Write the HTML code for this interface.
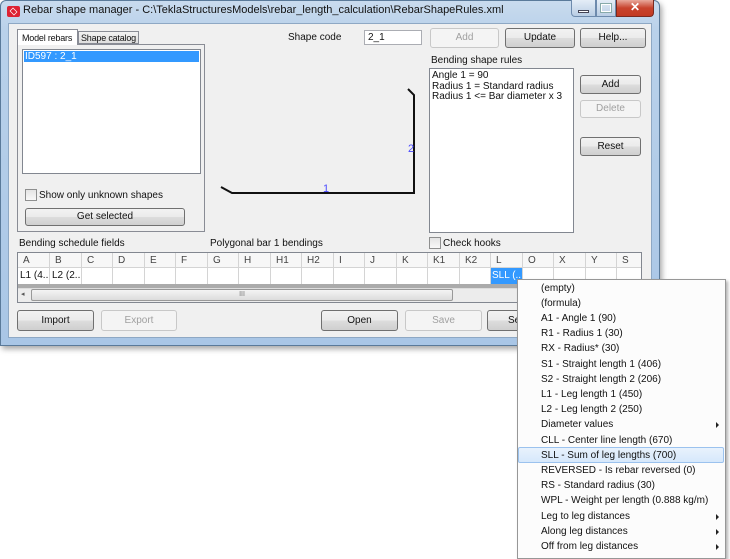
<!DOCTYPE html>
<html><head><style>
*{margin:0;padding:0;box-sizing:border-box}
body{width:730px;height:552px;background:#fff;position:relative;overflow:hidden;font-family:"Liberation Sans",sans-serif;font-size:10px;color:#111}
.a{position:absolute;white-space:nowrap}
.btn{position:absolute;border:1px solid #707070;border-radius:3px;background:linear-gradient(#f2f2f2,#ebebeb 50%,#dddddd 51%,#cfcfcf);text-align:center;font-size:10px;color:#111;white-space:nowrap}
.dis{border-color:#c8c8c8;background:#f4f4f4;color:#a0a0a0}
.cb{position:absolute;width:12px;height:12px;border:1px solid #8e8f8f;background:linear-gradient(#e4e4e4,#f8f8f8)}
.col{position:absolute;top:0;height:31px;border-right:1px solid #d4d4d4}
.mi{position:absolute;left:23px;font-size:10px;color:#111;white-space:nowrap}
.arr{position:absolute;right:6px;width:0;height:0;border-left:3px solid #222;border-top:3px solid transparent;border-bottom:3px solid transparent}
</style></head><body>
<div class="a" style="left:0;top:0;width:660px;height:346px;background:linear-gradient(#c9dbee,#b9d1ea 30px,#a9c6e6);border:1px solid #5a7a9a;border-radius:6px 6px 0 0;box-shadow:2px 3px 6px rgba(0,0,0,.35)"></div>
<div class="a" style="left:7px;top:6px;width:13px;height:11px;background:#d23;border-radius:2px"></div>
<div class="a" style="left:9px;top:8px;width:9px;height:7px;border:1px solid #fff;transform:rotate(45deg) scale(.7)"></div>
<div class="a" style="left:23px;top:4px;font-size:11px;color:#111">Rebar shape manager - C:\TeklaStructuresModels\rebar_length_calculation\RebarShapeRules.xml</div>
<div class="a" style="left:571px;top:0;width:25px;height:17px;border:1px solid #6d8aad;border-top:none;border-radius:0 0 0 4px;background:linear-gradient(#e4edf7,#b9cde4)"></div>
<div class="a" style="left:578px;top:10px;width:11px;height:3px;background:#fff;border:1px solid #445"></div>
<div class="a" style="left:596px;top:0;width:20px;height:17px;border:1px solid #6d8aad;border-top:none;background:linear-gradient(#e4edf7,#b9cde4)"></div>
<div class="a" style="left:601px;top:4px;width:10px;height:8px;border:1px solid #fff;outline:1px solid #8aa"></div>
<div class="a" style="left:616px;top:0;width:38px;height:17px;border:1px solid #7a2a20;border-top:none;border-radius:0 0 4px 0;background:linear-gradient(#e9a99c,#c8432d 50%,#c23a23);color:#fff;font-weight:bold;font-size:12px;text-align:center;line-height:15px">✕</div>
<div class="a" style="left:8px;top:23px;width:644px;height:315px;background:#f0f0f0;border:1px solid #8ea8c4"></div>
<div class="a" style="left:17px;top:44px;width:188px;height:188px;border:1px solid #898c95;background:#fff"></div>
<div class="a" style="left:17px;top:29px;width:61px;height:16px;border:1px solid #898c95;border-bottom:none;background:#fff;font-size:9px;letter-spacing:-0.2px;padding:3px 0 0 4px;overflow:hidden">Model rebars</div>
<div class="a" style="left:78px;top:31px;width:61px;height:13px;border:1px solid #898c95;background:linear-gradient(#f2f2f2,#dedede);font-size:9px;letter-spacing:-0.2px;padding:1px 0 0 2px;overflow:hidden">Shape catalog</div>
<div class="a" style="left:18px;top:45px;width:186px;height:186px;background:#f0f0f0"></div>
<div class="a" style="left:22px;top:49px;width:179px;height:125px;border:1px solid #828790;background:#fff"></div>
<div class="a" style="left:24px;top:51px;width:175px;height:11px;background:#3399ff;color:#fff;font-size:10px;line-height:11px;padding-left:1px">ID597 : 2_1</div>
<div class="cb" style="left:25px;top:189px"></div>
<div class="a" style="left:39px;top:190px">Show only unknown shapes</div>
<div class="btn" style="left:25px;top:208px;width:160px;height:18px;line-height:16px">Get selected</div>
<div class="a" style="left:288px;top:32px">Shape code</div>
<div class="a" style="left:364px;top:30px;width:58px;height:15px;border:1px solid #abadb3;background:#fff;padding:1px 3px">2_1</div>
<div class="btn dis" style="left:430px;top:28px;width:69px;height:20px;line-height:18px">Add</div>
<div class="btn" style="left:505px;top:28px;width:70px;height:20px;line-height:18px">Update</div>
<div class="btn" style="left:580px;top:28px;width:66px;height:20px;line-height:18px">Help...</div>
<div class="a" style="left:431px;top:55px">Bending shape rules</div>
<div class="a" style="left:429px;top:68px;width:145px;height:165px;border:1px solid #828790;background:#fff;padding:2px 2px;line-height:10.5px;font-size:10px">Angle 1 = 90<br>Radius 1 = Standard radius<br>Radius 1 &lt;= Bar diameter x 3</div>
<div class="btn" style="left:580px;top:75px;width:61px;height:19px;line-height:17px">Add</div>
<div class="btn dis" style="left:580px;top:100px;width:61px;height:18px;line-height:16px">Delete</div>
<div class="btn" style="left:580px;top:137px;width:61px;height:19px;line-height:17px">Reset</div>
<svg class="a" style="left:0;top:0" width="730" height="552"><polyline points="221,187 232,193 414,193 414,95 408,89" fill="none" stroke="#111" stroke-width="2"/></svg>
<div class="a" style="left:323px;top:183px;color:#4a4aff;font-size:11px">1</div>
<div class="a" style="left:408px;top:143px;color:#4a4aff;font-size:11px">2</div>
<div class="cb" style="left:429px;top:237px"></div>
<div class="a" style="left:443px;top:238px">Check hooks</div>
<div class="a" style="left:19px;top:238px">Bending schedule fields</div>
<div class="a" style="left:210px;top:238px">Polygonal bar 1 bendings</div>
<div class="a" style="left:17px;top:252px;width:625px;height:51px;border:1px solid #828790;background:#ababab;overflow:hidden">
 <div class="a" style="left:0;top:0;width:623px;height:15px;background:#f7f7f7;border-bottom:1px solid #d4d4d4"></div>
 <div class="a" style="left:0;top:15px;width:623px;height:16px;background:#fff"></div>
 <div class="a" style="left:473px;top:15px;width:32px;height:16px;background:#3399ff;color:#fff;padding:2px 1px;overflow:hidden">SLL (...</div>
 <div class="a" style="left:2px;top:17px;width:29px;overflow:hidden">L1 (4...</div>
 <div class="a" style="left:34px;top:17px;width:29px;overflow:hidden">L2 (2...</div>
 <div class="col" style="left:0;width:32px"></div><div class="col" style="left:32px;width:32px"></div><div class="col" style="left:64px;width:31px"></div><div class="col" style="left:95px;width:32px"></div><div class="col" style="left:127px;width:31px"></div><div class="col" style="left:158px;width:32px"></div><div class="col" style="left:190px;width:31px"></div><div class="col" style="left:221px;width:32px"></div><div class="col" style="left:253px;width:31px"></div><div class="col" style="left:284px;width:32px"></div><div class="col" style="left:316px;width:31px"></div><div class="col" style="left:347px;width:32px"></div><div class="col" style="left:379px;width:31px"></div><div class="col" style="left:410px;width:32px"></div><div class="col" style="left:442px;width:31px"></div><div class="col" style="left:473px;width:32px"></div><div class="col" style="left:505px;width:31px"></div><div class="col" style="left:536px;width:32px"></div><div class="col" style="left:568px;width:31px"></div>
 <div class="a" style="top:2px;left:5px;color:#444">A</div><div class="a" style="top:2px;left:37px;color:#444">B</div><div class="a" style="top:2px;left:69px;color:#444">C</div><div class="a" style="top:2px;left:100px;color:#444">D</div><div class="a" style="top:2px;left:132px;color:#444">E</div><div class="a" style="top:2px;left:163px;color:#444">F</div><div class="a" style="top:2px;left:195px;color:#444">G</div><div class="a" style="top:2px;left:226px;color:#444">H</div><div class="a" style="top:2px;left:258px;color:#444">H1</div><div class="a" style="top:2px;left:289px;color:#444">H2</div><div class="a" style="top:2px;left:321px;color:#444">I</div><div class="a" style="top:2px;left:352px;color:#444">J</div><div class="a" style="top:2px;left:384px;color:#444">K</div><div class="a" style="top:2px;left:415px;color:#444">K1</div><div class="a" style="top:2px;left:447px;color:#444">K2</div><div class="a" style="top:2px;left:478px;color:#444">L</div><div class="a" style="top:2px;left:510px;color:#444">O</div><div class="a" style="top:2px;left:541px;color:#444">X</div><div class="a" style="top:2px;left:573px;color:#444">Y</div><div class="a" style="top:2px;left:604px;color:#444">S</div>
 <div class="a" style="left:0;top:35px;width:623px;height:14px;background:#ececec;border-top:1px solid #ddd"></div>
 <div class="a" style="left:3px;top:37px;font-size:7px;color:#555">◂</div>
 <div class="a" style="left:13px;top:36px;width:422px;height:12px;border:1px solid #999;border-radius:2px;background:linear-gradient(#f4f4f4,#dcdcdc);text-align:center;font-size:7px;color:#777;line-height:10px">III</div>
</div>
<div class="btn" style="left:17px;top:310px;width:77px;height:21px;line-height:19px">Import</div>
<div class="btn dis" style="left:101px;top:310px;width:76px;height:21px;line-height:19px">Export</div>
<div class="btn" style="left:321px;top:310px;width:77px;height:21px;line-height:19px">Open</div>
<div class="btn dis" style="left:405px;top:310px;width:77px;height:21px;line-height:19px">Save</div>
<div class="btn" style="left:487px;top:310px;width:77px;height:21px;line-height:19px;text-align:left;padding-left:20px">Se</div>
<div class="a" style="left:517px;top:279px;width:209px;height:280px;background:#fcfcfc;border:1px solid #979797;box-shadow:2px 2px 3px rgba(0,0,0,.3)">
 <div class="a" style="left:0;top:167px;width:206px;height:16px;background:linear-gradient(#e8f2fd,#d6e8fb);border:1px solid #9bc2ee;border-radius:2px"></div>
 <div class="mi" style="top:3px">(empty)</div>
 <div class="mi" style="top:18px">(formula)</div>
 <div class="mi" style="top:33px">A1 - Angle 1 (90)</div>
 <div class="mi" style="top:48px">R1 - Radius 1 (30)</div>
 <div class="mi" style="top:63px">RX - Radius* (30)</div>
 <div class="mi" style="top:79px">S1 - Straight length 1 (406)</div>
 <div class="mi" style="top:94px">S2 - Straight length 2 (206)</div>
 <div class="mi" style="top:109px">L1 - Leg length 1 (450)</div>
 <div class="mi" style="top:124px">L2 - Leg length 2 (250)</div>
 <div class="mi" style="top:139px">Diameter values</div><div class="arr" style="top:142px"></div>
 <div class="mi" style="top:155px">CLL - Center line length (670)</div>
 <div class="mi" style="top:170px">SLL - Sum of leg lengths (700)</div>
 <div class="mi" style="top:185px">REVERSED - Is rebar reversed (0)</div>
 <div class="mi" style="top:200px">RS - Standard radius (30)</div>
 <div class="mi" style="top:215px">WPL - Weight per length (0.888 kg/m)</div>
 <div class="mi" style="top:231px">Leg to leg distances</div><div class="arr" style="top:234px"></div>
 <div class="mi" style="top:246px">Along leg distances</div><div class="arr" style="top:249px"></div>
 <div class="mi" style="top:261px">Off from leg distances</div><div class="arr" style="top:264px"></div>
</div>
</body></html>
